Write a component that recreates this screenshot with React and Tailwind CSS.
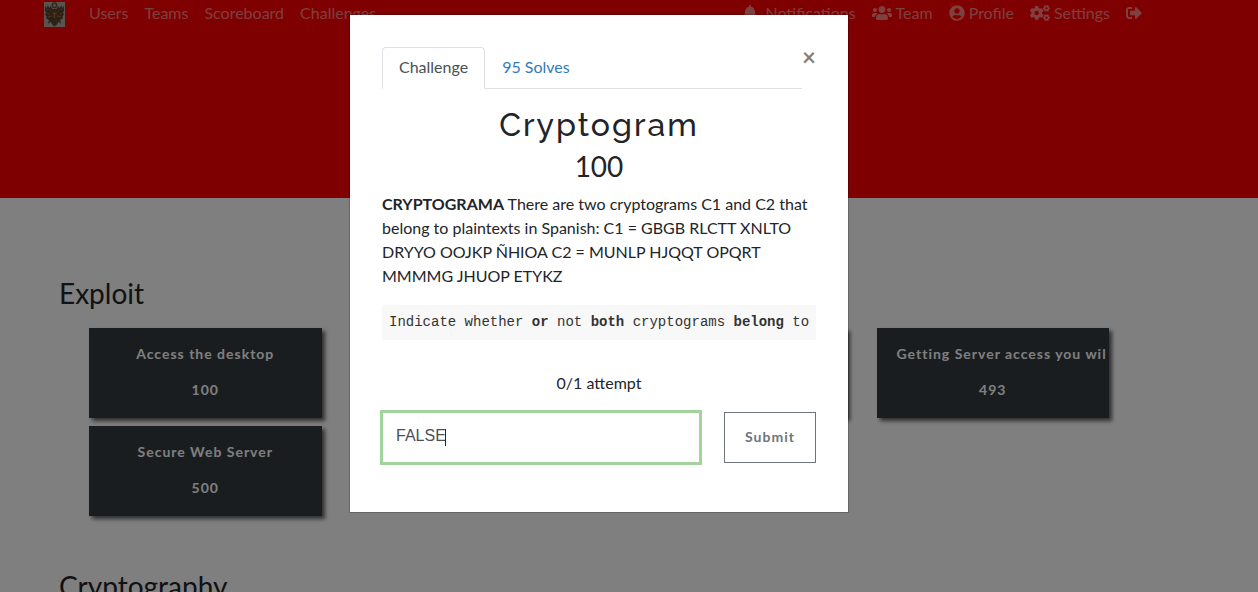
import { FaBell, FaUsers, FaUserCircle, FaCogs, FaSignOutAlt } from "react-icons/fa";

function Crest() {
  return (
    <svg viewBox="0 0 21 25" className="h-[25px] w-[21px]" aria-hidden="true">
      <rect width="21" height="25" fill="#b0a8a2" />
      <circle cx="10.500" cy="3.300" r="2.600" fill="#8a7a52" stroke="#4c4230" strokeWidth="1" />
      <path d="M10.500 1.500v3.500M9 3.300h3" stroke="#c4b48a" strokeWidth=".6" />
      <path d="M1 4l2 2 .500-3 2 3 1-2 2 3h4l2-3 1 2 2-3 .500 3 2-2v5l-1 1.500 1 2-1.500 2 .500 2-2.500 1-.500 2.500-2 0-1.500 2-2 2.500-2-2.500-1.500-2-2 0-.500-2.500-2.500-1 .500-2-1.500-2 1-2-1-1.500z" fill="#5a452a" />
      <path d="M2.500 7l4 3M18.500 7l-4 3M3 11l4 1.500M18 11l-4 1.500M4 15l4-1M17 15l-4-1" stroke="#94794a" strokeWidth=".8" />
      <path d="M4 8l3 5M17 8l-3 5M6 17l2-1M15 17l-2-1" stroke="#38290f" strokeWidth=".8" />
      <path d="M8 9.500h5v5l-2.500 2.500-2.500-2.500z" fill="#75402a" />
      <path d="M9 11.500h3M10.500 10v6" stroke="#9a8254" strokeWidth=".7" />
      <path d="M4 21l3-2 1.500 3 2 1.500 2-1.500 1.500-3 3 2" fill="none" stroke="#5a4a2c" strokeWidth="1.200" />
    </svg>
  );
}

const links = ["Users", "Teams", "Scoreboard", "Challenges"];

const exploit = [
  { title: "Access the desktop", points: "100" },
  {},
  {},
  { title: "Getting Server access you wil", points: "493" },
  { title: "Secure Web Server", points: "500" },
];

function ChallengeCard({ title, points }) {
  return (
    <button
      type="button"
      className="block h-[90px] min-w-0 bg-[#343a40] px-5 pt-4 text-center text-sm leading-5 font-bold tracking-[1px] text-white shadow-[3px_3px_4px_#000000a0]"
    >
      <span className="flex h-full flex-col gap-4">
        <span className="block h-5 whitespace-nowrap">{title}</span>
        <span className="block h-5">{points}</span>
      </span>
    </button>
  );
}

function Nav() {
  return (
    <nav className="mx-auto flex max-w-[1110px] items-start text-base leading-6 text-white/50">
      <a href="#home" aria-label="Home" className="mr-6 pt-[2px]">
        <Crest />
      </a>
      <div className="flex gap-4 pt-px">
        {links.map((l) => (
          <a key={l} href={"#" + l.toLowerCase()}>{l}</a>
        ))}
      </div>
      <div className="mr-3 ml-auto flex gap-4 pt-px">
        <a href="#notifications" className="flex items-center gap-2">
          <FaBell className="w-[14px]" />Notifications
        </a>
        <a href="#team" className="flex items-center gap-1">
          <FaUsers className="w-5" />Team
        </a>
        <a href="#profile" className="flex items-center gap-1">
          <FaUserCircle className="w-4" />Profile
        </a>
        <a href="#settings" className="flex items-center gap-1">
          <FaCogs className="w-5" />Settings
        </a>
        <a href="#logout" aria-label="Logout" className="flex items-center">
          <FaSignOutAlt className="w-4" />
        </a>
      </div>
    </nav>
  );
}

function ChallengeModal() {
  return (
    <div className="fixed inset-0 overflow-hidden bg-black/50 pt-[14px] pr-[60px]">
      <div role="dialog" aria-modal="true" aria-labelledby="challenge-name" className="mx-auto max-w-[500px] border border-black/20 bg-white bg-clip-padding px-8 pt-8 pb-[49px]">
        <div className="flex items-start">
          <div role="tablist" className="flex flex-1 border-b border-[#dee2e6]">
            <button type="button" role="tab" aria-selected="true" className="-mb-px rounded-t border border-[#dee2e6] border-b-white bg-white px-4 pt-[7px] pb-[9px] text-base leading-6 text-[#495057]">
              Challenge
            </button>
            <button type="button" role="tab" aria-selected="false" className="px-[17px] pt-2 pb-[9px] text-base leading-6 text-[#337ab7]">
              95 Solves
            </button>
          </div>
          <button type="button" aria-label="Close" className="w-[14px] text-2xl leading-5 font-bold text-black/50">
            ×
          </button>
        </div>
        <h2 id="challenge-name" className="mt-4 text-center font-['Raleway','Lato',sans-serif] text-[32px] leading-10 font-medium tracking-[2px]">
          Cryptogram
        </h2>
        <h3 className="mt-1 text-center text-[28px] leading-[34px]">100</h3>
        <p className="mt-[9px] text-base leading-6">
          <strong>CRYPTOGRAMA</strong> There are two cryptograms C1 and C2 that belong to plaintexts in Spanish: C1 = GBGB RLCTT XNLTO DRYYO OOJKP ÑHIOA C2 = MUNLP HJQQT OPQRT MMMMG JHUOP ETYKZ
        </p>
        <pre className="mt-[17px] overflow-hidden bg-[#f8f8f8] p-[7px] font-['Liberation_Mono',monospace] text-sm leading-[21px] text-[#333]">
          Indicate whether <b>or</b> not <b>both</b> cryptograms <b>belong</b> to
        </pre>
        <p className="mt-[31px] text-center text-base leading-6">0/1 attempt</p>
        <form className="mt-[17px] flex gap-6" onSubmit={(e) => e.preventDefault()}>
          <div className="relative flex-1">
            <input
              aria-label="Flag"
              defaultValue="FALSE"
              className="block h-[51px] w-full border border-[#a3d39c] px-[13px] pb-1 font-['Liberation_Sans',sans-serif] text-base text-[#495057] ring-2 ring-[#a3d39c] outline-none"
            />
            <span className="absolute top-[17px] left-[63px] h-[17px] w-px bg-[#212529]" />
          </div>
          <button type="submit" className="w-[92px] border border-[#6c757d] pb-[2px] text-sm font-bold tracking-[1px] text-[#6c757d]">
            Submit
          </button>
        </form>
      </div>
    </div>
  );
}

export default function App() {
  return (
    <div className="h-screen overflow-hidden bg-white font-['Lato',sans-serif] text-[#212529]">
      <header className="h-[198px] bg-[#ff0000] pr-[60px]">
        <Nav />
      </header>
      <main className="pr-[60px]">
        <div className="mx-auto flex max-w-[1080px] flex-col gap-[53px] pt-[78px]">
          <section>
            <h3 className="text-[28px] leading-[34px] font-normal">Exploit</h3>
            <div className="mt-[18px] grid grid-cols-4 gap-x-[30px] gap-y-2 px-[30px]">
              {exploit.map((c, i) => (
                <ChallengeCard key={i} {...c} />
              ))}
            </div>
          </section>
          <section>
            <h3 className="text-[28px] leading-[34px] font-normal">Cryptography</h3>
          </section>
        </div>
      </main>
      <ChallengeModal />
    </div>
  );
}
